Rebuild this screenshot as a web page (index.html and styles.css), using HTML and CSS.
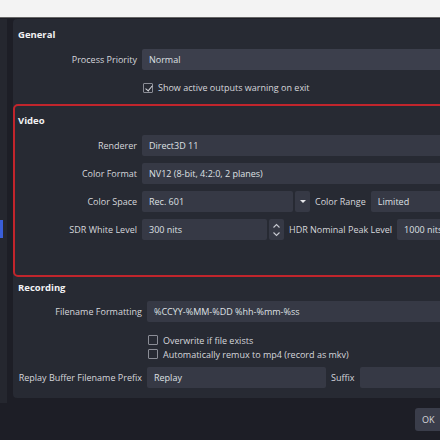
FILE: index.html
```html
<!DOCTYPE html>
<html lang="en">
<head>
    <meta charset="UTF-8">
    <title>Settings - Advanced</title>
    <link rel="stylesheet" href="styles.css">
</head>
<body>
    <!-- Window title strip -->
    <div class="titlebar"></div>

    <div class="window">
        <!-- Settings page list -->
        <div class="sidebar">
            <div class="sidebar-item active"></div>
        </div>

        <div class="content">
            <!-- General -->
            <div class="group group-general">
                <div class="group-title">General</div>
                <div class="row">
                    <div class="label">Process Priority</div>
                    <div class="field combo hover">Normal</div>
                </div>
                <div class="row">
                    <div class="label"></div>
                    <label class="check"><span class="box checked"></span>Show active outputs warning on exit</label>
                </div>
            </div>

            <!-- Video -->
            <div class="group group-video">
                <div class="group-title">Video</div>
                <div class="row">
                    <div class="label">Renderer</div>
                    <div class="field combo">Direct3D 11</div>
                </div>
                <div class="row">
                    <div class="label">Color Format</div>
                    <div class="field combo">NV12 (8-bit, 4:2:0, 2 planes)</div>
                </div>
                <div class="row">
                    <div class="label">Color Space</div>
                    <div class="split split-combo">
                        <div class="field combo grow">Rec. 601</div>
                        <div class="field arrow-btn"><span class="tri"></span></div>
                    </div>
                    <div class="inline-label">Color Range</div>
                    <div class="field combo">Limited</div>
                </div>
                <div class="row">
                    <div class="label">SDR White Level</div>
                    <div class="split split-spin">
                        <div class="field combo grow">300 nits</div>
                        <div class="field spin-btn">
                            <svg width="9" height="16" viewBox="0 0 9 16"><path d="M1.5 5.5 L4.5 2.5 L7.5 5.5 M1.5 10.5 L4.5 13.5 L7.5 10.5" fill="none" stroke="#c8cad2" stroke-width="1.1"/></svg>
                        </div>
                    </div>
                    <div class="inline-label">HDR Nominal Peak Level</div>
                    <div class="field combo">1000 nits</div>
                </div>
            </div>

            <!-- Recording -->
            <div class="group group-recording">
                <div class="group-title">Recording</div>
                <div class="row">
                    <div class="label">Filename Formatting</div>
                    <div class="field combo">%CCYY-%MM-%DD %hh-%mm-%ss</div>
                </div>
                <div class="row small first">
                    <div class="label"></div>
                    <label class="check"><span class="box"></span>Overwrite if file exists</label>
                </div>
                <div class="row small">
                    <div class="label"></div>
                    <label class="check"><span class="box"></span>Automatically remux to mp4 (record as mkv)</label>
                </div>
                <div class="row">
                    <div class="label">Replay Buffer Filename Prefix</div>
                    <div class="field combo prefix">Replay</div>
                    <div class="inline-label">Suffix</div>
                    <div class="field combo"></div>
                </div>
            </div>
        </div>
    </div>

    <!-- Dialog buttons -->
    <div class="buttons">
        <button class="button">OK</button>
    </div>
</body>
</html>
```

FILE: styles.css
```css
body {
    margin: 0;
    width: 440px;
    height: 440px;
    overflow: hidden;
    background-color: #1d1e26;
    font-family: "Open Sans", "Noto Sans", sans-serif;
    font-size: 9px;
    color: #d6d7dc;
}
.titlebar {
    height: 17px;
    background-color: #f3f3f3;
    border-bottom: 1px solid #666;
}
.window {
    display: flex;
    align-items: flex-start;
    padding-top: 1px;
}
.sidebar {
    width: 7px;
    height: 384px;
    flex-shrink: 0;
    background-color: #25272f;
    padding-top: 201px;
    box-sizing: border-box;
}
.sidebar-item {
    height: 18px;
    width: 3px;
}
.sidebar-item.active {
    background-color: #3a5ed8;
}
.content {
    margin-left: 6px;
    width: 520px;
    flex-shrink: 0;
    background-color: #272a33;
    border-radius: 4px;
    padding-bottom: 10px;
}
.group-title {
    height: 14px;
    line-height: 14px;
    font-weight: bold;
    font-size: 9.5px;
    color: #f2f2f4;
}
.group-general {
    padding: 9px 0 0 5px;
}
.group-video {
    margin-top: 6px;
    border: 2px solid #c1252c;
    border-radius: 5px;
    padding: 8px 0 35px 3px;
}
.group-recording {
    padding: 4px 0 0 5px;
}
.row {
    display: flex;
    align-items: center;
    height: 21px;
    margin-top: 7px;
}
.group-recording .row {
    margin-top: 6px;
}
.group-recording .row.small {
    height: 14px;
    margin-top: 0;
}
.group-recording .row.small.first {
    margin-top: 11px;
}
.label {
    width: 119px;
    flex-shrink: 0;
    text-align: right;
    margin-right: 5px;
    white-space: nowrap;
}
.group-recording .label {
    width: 124px;
}
.field {
    height: 21px;
    line-height: 21px;
    background-color: #363945;
    border-radius: 2px;
    color: #dfe0e4;
    box-sizing: border-box;
    white-space: nowrap;
}
.combo {
    flex: 1;
    padding-left: 7px;
}
.combo.hover {
    background-color: #3c3f4c;
}
.split {
    display: flex;
    gap: 2px;
    flex-shrink: 0;
}
.split-combo {
    width: 168px;
}
.split-spin {
    width: 142px;
}
.grow {
    flex: 1;
}
.arrow-btn {
    width: 15px;
    display: flex;
    align-items: center;
    justify-content: center;
}
.tri {
    width: 0;
    height: 0;
    border-left: 3px solid transparent;
    border-right: 3px solid transparent;
    border-top: 3px solid #e6e7ea;
}
.spin-btn {
    width: 15px;
    display: flex;
    align-items: center;
    justify-content: center;
}
.inline-label {
    padding: 0 5px;
    white-space: nowrap;
}
.prefix {
    flex: none;
    width: 179px;
}
.check {
    display: flex;
    align-items: center;
    margin-left: 1px;
    white-space: nowrap;
}
.box {
    width: 10px;
    height: 10px;
    border: 1px solid #8b8d96;
    border-radius: 1px;
    box-sizing: border-box;
    margin-right: 5px;
    position: relative;
}
.box.checked::after {
    content: '';
    position: absolute;
    left: 2.5px;
    top: 0;
    width: 3px;
    height: 6px;
    border-right: 1px solid #d8d9de;
    border-bottom: 1px solid #d8d9de;
    transform: rotate(40deg);
}
.buttons {
    padding: 5px 0 0 415px;
}
.button {
    width: 50px;
    height: 23px;
    border: none;
    border-radius: 3px;
    background-color: #3a3d4a;
    color: #d6d7dc;
    font-family: "Open Sans", "Noto Sans", sans-serif;
    font-size: 9px;
    text-align: left;
    padding-left: 7px;
}
```
